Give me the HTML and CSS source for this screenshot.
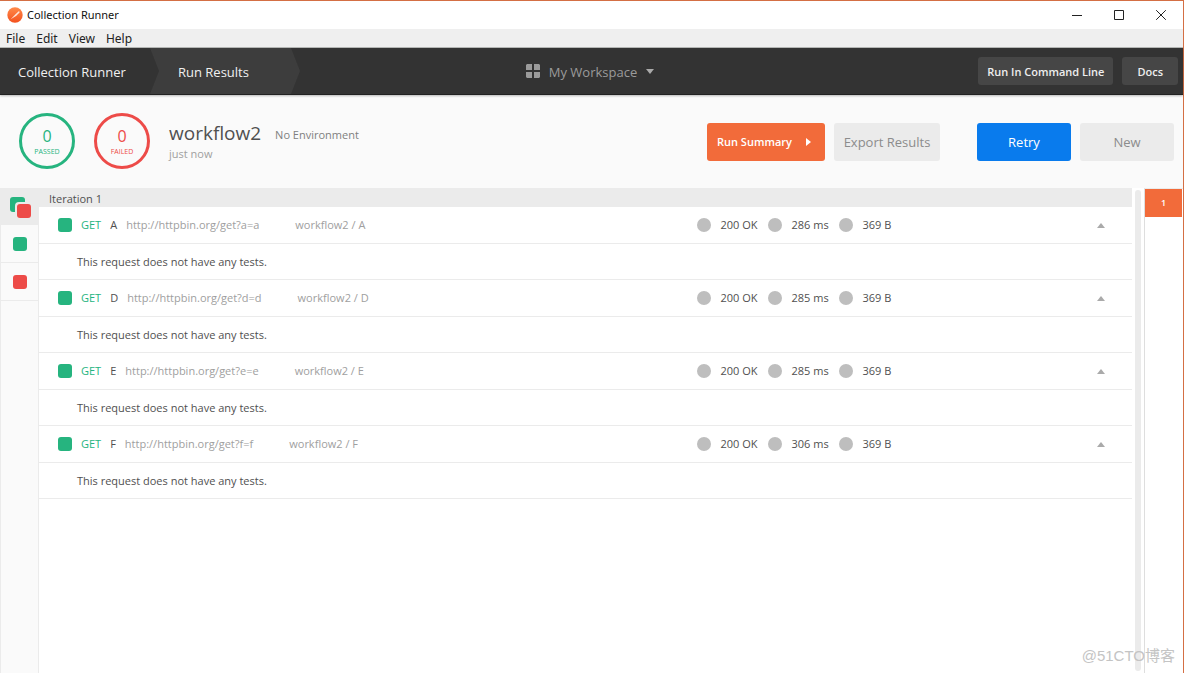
FILE: index.html
```html
<!DOCTYPE html>
<html lang="en">
<head>
<meta charset="utf-8">
<title>Collection Runner</title>
<link rel="stylesheet" href="styles.css">
</head>
<body>
<div class="window">
  <header class="titlebar">
    <svg class="logo" viewBox="0 0 16 16" aria-hidden="true">
      <defs><linearGradient id="flame" x1="0" y1="0" x2="0" y2="1"><stop offset="0" stop-color="#ff8a4a"/><stop offset="1" stop-color="#f4511e"/></linearGradient></defs>
      <circle cx="8" cy="8" r="7.7" fill="url(#flame)"/>
      <path d="M3.7 12.3 8 7.8l3.4-3.3a.8.8 0 0 1 1.1 1.1L9 9z" fill="#ffe6da"/>
    </svg>
    <h1 class="titlebar-title">Collection Runner</h1>
    <div class="window-controls">
      <button class="window-control" aria-label="Minimize"><svg viewBox="0 0 12 12"><path d="M1 6.5h10"/></svg></button>
      <button class="window-control" aria-label="Maximize"><svg viewBox="0 0 12 12"><path d="M1.5 1.5h9v9h-9z"/></svg></button>
      <button class="window-control" aria-label="Close"><svg viewBox="0 0 12 12"><path d="M1.2 1.2l9.6 9.6M10.8 1.2l-9.6 9.6"/></svg></button>
    </div>
  </header>
  <nav class="menubar">
    <button class="menu">File</button>
    <button class="menu">Edit</button>
    <button class="menu">View</button>
    <button class="menu">Help</button>
  </nav>
  <div class="navbar">
    <nav class="crumbs">
      <a class="crumb" href="#runner">Collection Runner</a>
      <a class="crumb crumb-current" href="#results">Run Results</a>
    </nav>
    <button class="workspace">
      <svg class="grid-icon" viewBox="0 0 14 14" aria-hidden="true"><path d="M1 0h5v6H0V1zM8 0h5l1 1v5H8zM0 8h6v6H1l-1-1zM8 8h6v5l-1 1H8z"/></svg>
      <span>My Workspace</span>
      <svg class="caret-down" viewBox="0 0 8 5" aria-hidden="true"><path d="M0 0h8L4 5z"/></svg>
    </button>
    <div class="nav-actions">
      <button class="nav-button">Run In Command Line</button>
      <button class="nav-button">Docs</button>
    </div>
  </div>
  <section class="summary">
    <div class="count count-passed"><span class="count-value">0</span><span class="count-label">PASSED</span></div>
    <div class="count count-failed"><span class="count-value">0</span><span class="count-label">FAILED</span></div>
    <div class="run-info">
      <div class="run-heading"><h2 class="run-name">workflow2</h2><span class="run-env">No Environment</span></div>
      <p class="run-time">just now</p>
    </div>
    <div class="summary-actions">
      <button class="button button-summary">Run Summary <svg class="caret-right" viewBox="0 0 5 8" aria-hidden="true"><path d="M0 0l5 4-5 4z"/></svg></button>
      <button class="button button-export">Export Results</button>
      <button class="button button-retry">Retry</button>
      <button class="button button-new">New</button>
    </div>
  </section>
  <main class="content">
    <aside class="filters">
      <button class="filter filter-active" aria-label="All tests"><svg class="stack-icon" viewBox="0 0 22 22"><rect x="0" y="0" width="15" height="15" rx="3" fill="#26b47f"/><rect x="5" y="5" width="17" height="17" rx="4" fill="#ebebeb"/><rect x="7" y="7" width="14" height="14" rx="3" fill="#ed4b48"/></svg></button>
      <button class="filter" aria-label="Passed tests"><span class="square square-pass"></span></button>
      <button class="filter" aria-label="Failed tests"><span class="square square-fail"></span></button>
    </aside>
    <section class="results">
      <h3 class="iteration">Iteration 1</h3>
      <article class="result">
        <div class="request"><div class="request-main"><span class="square square-pass"></span><span class="method">GET</span><span class="name">A</span><span class="url">http://httpbin.org/get?a=a</span><span class="path">workflow2 / A</span></div>
        <div class="stats"><span class="stat stat-code">200 OK</span><span class="stat stat-time">286 ms</span><span class="stat">369 B</span></div><button class="collapse" aria-label="Collapse A"><svg viewBox="0 0 8 5"><path d="M0 5h8L4 0z"/></svg></button></div>
        <p class="tests">This request does not have any tests.</p>
      </article>
      <article class="result">
        <div class="request"><div class="request-main"><span class="square square-pass"></span><span class="method">GET</span><span class="name">D</span><span class="url">http://httpbin.org/get?d=d</span><span class="path">workflow2 / D</span></div>
        <div class="stats"><span class="stat stat-code">200 OK</span><span class="stat stat-time">285 ms</span><span class="stat">369 B</span></div><button class="collapse" aria-label="Collapse D"><svg viewBox="0 0 8 5"><path d="M0 5h8L4 0z"/></svg></button></div>
        <p class="tests">This request does not have any tests.</p>
      </article>
      <article class="result">
        <div class="request"><div class="request-main"><span class="square square-pass"></span><span class="method">GET</span><span class="name">E</span><span class="url">http://httpbin.org/get?e=e</span><span class="path">workflow2 / E</span></div>
        <div class="stats"><span class="stat stat-code">200 OK</span><span class="stat stat-time">285 ms</span><span class="stat">369 B</span></div><button class="collapse" aria-label="Collapse E"><svg viewBox="0 0 8 5"><path d="M0 5h8L4 0z"/></svg></button></div>
        <p class="tests">This request does not have any tests.</p>
      </article>
      <article class="result">
        <div class="request"><div class="request-main"><span class="square square-pass"></span><span class="method">GET</span><span class="name">F</span><span class="url">http://httpbin.org/get?f=f</span><span class="path">workflow2 / F</span></div>
        <div class="stats"><span class="stat stat-code">200 OK</span><span class="stat stat-time">306 ms</span><span class="stat">369 B</span></div><button class="collapse" aria-label="Collapse F"><svg viewBox="0 0 8 5"><path d="M0 5h8L4 0z"/></svg></button></div>
        <p class="tests">This request does not have any tests.</p>
      </article>
    </section>
    <div class="scroll-track"></div>
    <aside class="iterations"><button class="iteration-link">1</button></aside>
  </main>
  <span class="watermark">@51CTO博客</span>
</div>
</body>
</html>
```
FILE: styles.css
```css
* { box-sizing: border-box; }

body {
  margin: 0;
  font-family: "Open Sans", "Noto Sans", sans-serif;
  font-size: 11px;
  line-height: 16px;
  color: #505050;
  background: #fff;
}

h1, h2, h3, p { margin: 0; font-weight: 400; }

button {
  margin: 0;
  padding: 0;
  border: 0;
  background: none;
  font: inherit;
  color: inherit;
}

svg { display: block; }

.window {
  position: relative;
  display: flex;
  flex-direction: column;
  min-height: 100vh;
  border-top: 1px solid #d46f44;
  border-right: 1px solid #d46f44;
}

.titlebar {
  display: flex;
  align-items: center;
  height: 28px;
  padding-left: 7px;
  gap: 4px;
  color: #111;
}

.logo { width: 16px; height: 16px; }

.titlebar-title {
  flex: 1;
  font-family: "Noto Sans", sans-serif;
  font-size: 11px;
}

.window-controls { display: flex; padding-right: 1px; }

.window-control {
  display: grid;
  place-items: center;
  width: 42px;
  height: 28px;
}

.window-control svg {
  width: 12px;
  height: 12px;
  fill: none;
  stroke: #222;
}

.menubar {
  display: flex;
  height: 19px;
  padding-left: 6px;
  gap: 11px;
  background: #efefef;
  border-bottom: 1px solid #b8bab8;
  font-family: "Noto Sans", sans-serif;
  font-size: 12px;
  color: #222;
}

.menu { height: 18px; padding-top: 2px; }

.navbar {
  position: relative;
  display: grid;
  grid-template-columns: 1fr auto 1fr;
  align-items: center;
  height: 47px;
  background: #333;
  border-bottom: 1px solid #222;
  box-shadow: 0 1px 2px #0004;
  color: #eee;
}

.crumbs { display: flex; height: 46px; }

.crumb {
  display: flex;
  align-items: center;
  width: 159px;
  padding: 2px 0 0 18px;
  font-size: 13px;
  font-weight: 500;
  color: #f0f0f0;
  text-decoration: none;
}

.crumb-current {
  width: 150px;
  margin-left: -9px;
  padding-left: 28px;
  background: #3d3d3d;
  clip-path: polygon(0 0, 141px 0, 100% 50%, 141px 100%, 0 100%, 9px 50%);
}

.workspace {
  display: flex;
  align-items: center;
  gap: 9px;
  padding-right: 3px;
  font-size: 13px;
  color: #9b9b9b;
}

.workspace span { padding-top: 2px; }

.grid-icon { width: 14px; height: 14px; fill: #9b9b9b; }
.caret-down { width: 8px; height: 5px; fill: #aaa; }

.nav-actions {
  display: flex;
  justify-content: flex-end;
  gap: 9px;
  padding-right: 5px;
}

.nav-button {
  height: 28px;
  padding: 1px 9px 0;
  border-radius: 3px;
  background: #464646;
  font-weight: 600;
}

.nav-button:last-child { padding: 1px 15px 0; }

.summary {
  display: flex;
  align-items: center;
  height: 93px;
  padding: 0 9px 1px 19px;
  background: #fafafa;
}

.count {
  display: flex;
  flex-direction: column;
  align-items: center;
  justify-content: center;
  width: 56px;
  height: 56px;
  margin-right: 19px;
  padding-top: 2px;
  border: 3px solid;
  border-radius: 50%;
}

.count-passed { color: #26b47f; }
.count-failed { color: #ed4b48; }
.count-value { font-size: 16px; line-height: 20px; }
.count-label { font-size: 7px; line-height: 12px; }

.run-heading { display: flex; align-items: center; gap: 14px; }
.run-name { font-size: 19px; line-height: 24px; }
.run-env { padding-top: 4px; color: #808080; }
.run-time { padding-top: 1px; color: #a0a0a0; }

.summary-actions { display: flex; margin-left: auto; padding-top: 1px; }

.button {
  height: 38px;
  margin-left: 9px;
  border-radius: 3px;
  background: #ebebeb;
  font-size: 13px;
  color: #8c8c8c;
}

.button-summary {
  display: flex;
  align-items: center;
  justify-content: space-between;
  width: 118px;
  padding: 0 14px 0 10px;
  background: #f26b3a;
  font-size: 11px;
  font-weight: 600;
  color: #fff;
}

.caret-right { width: 5px; height: 8px; fill: #fff; }
.button-export { width: 106px; }

.button-retry {
  width: 94px;
  margin-left: 37px;
  background: #097bed;
  font-weight: 500;
  color: #fff;
}

.button-new { width: 94px; }

.content { display: flex; flex: 1; }

.filters {
  width: 39px;
  background: #fafafa;
  border-right: 1px solid #ebebeb;
  border-left: 1px solid #ebebeb;
}

.filter {
  display: grid;
  place-items: center;
  width: 100%;
  height: 38px;
  border-bottom: 1px solid #ebebeb;
}

.filter-active { height: 37px; padding: 4px 0 0 2px; background: #ebebeb; }
.stack-icon { width: 22px; height: 22px; }

.square {
  display: block;
  width: 14px;
  height: 14px;
  border-radius: 3px;
}

.square-pass { background: #26b47f; }
.square-fail { background: #ed4b48; }

.results { flex: 1; padding-right: 2px; }

.iteration {
  height: 19px;
  padding: 3px 0 0 10px;
  background: #ebebeb;
  font-size: 11px;
}

.request {
  display: flex;
  align-items: center;
  height: 37px;
  padding: 0 27px 0 19px;
  border-bottom: 1px solid #ebebeb;
}

.request-main {
  display: flex;
  align-items: center;
  flex: 637;
}

.method { margin-left: 9px; color: #26b47f; }
.name { margin-left: 9px; }
.url { margin-left: 9px; color: #a0a0a0; }
.path { margin-left: 36px; color: #a0a0a0; }

.stats { display: flex; flex: 398; }

.stat { display: flex; align-items: center; }

.stat::before {
  content: "";
  width: 14px;
  height: 14px;
  margin-right: 9px;
  border-radius: 50%;
  background: #bebebe;
}

.stat-code { width: 71px; }
.stat-time { width: 71px; }

.collapse svg { width: 8px; height: 5px; fill: #aaa; }

.tests {
  height: 36px;
  padding: 10px 0 0 38px;
  border-bottom: 1px solid #ebebeb;
}

.scroll-track {
  width: 6px;
  margin: 2px 3px 2px 1px;
  border-radius: 3px;
  background: #ebebeb;
}

.iterations {
  width: 39px;
  padding-right: 1px;
  border-top: 1px solid #ebebeb;
  border-left: 1px solid #dedede;
}

.iteration-link {
  width: 100%;
  height: 28px;
  background: #f26b3a;
  font-size: 9px;
  font-weight: 600;
  color: #fff;
}

.watermark {
  position: absolute;
  right: 8px;
  bottom: 7px;
  font-family: "Liberation Sans", "Noto Sans CJK SC", sans-serif;
  font-size: 15px;
  line-height: 20px;
  color: #c4c4c4;
}
```
